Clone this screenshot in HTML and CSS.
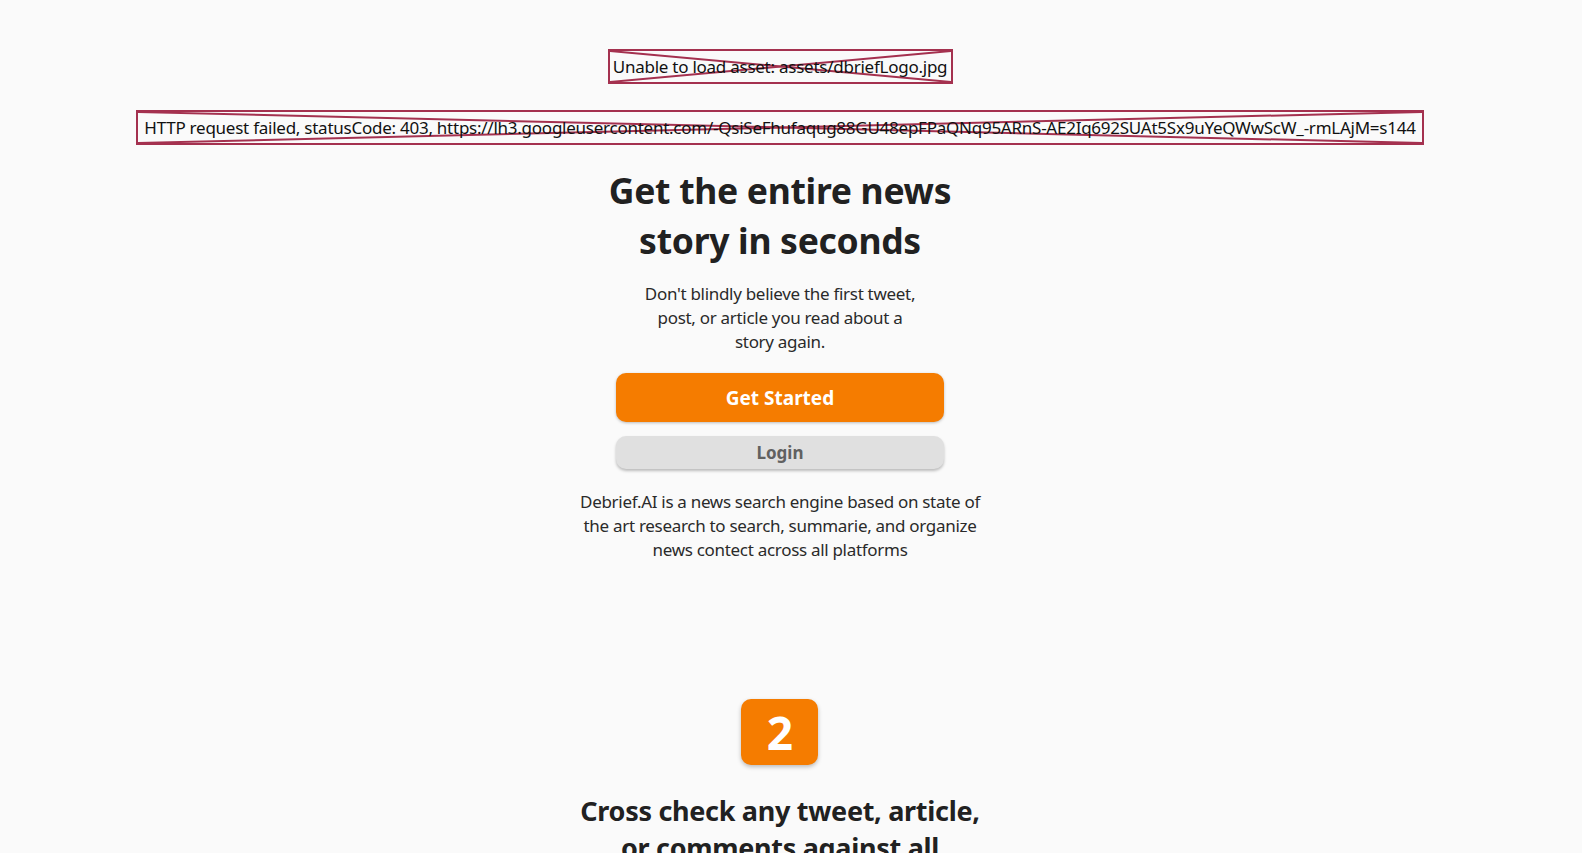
FILE: index.html
```html
<!DOCTYPE html>
<html lang="en">
<head>
<meta charset="utf-8">
<title>Debrief.AI</title>
<link rel="stylesheet" href="styles.css">
</head>
<body>
<main class="page">
  <div class="err err-logo">
    <svg class="err-x" viewBox="0 0 100 100" preserveAspectRatio="none" aria-hidden="true">
      <line x1="0" y1="0" x2="100" y2="100" vector-effect="non-scaling-stroke"/>
      <line x1="0" y1="100" x2="100" y2="0" vector-effect="non-scaling-stroke"/>
    </svg>
    <span class="err-text">Unable to load asset: assets/dbriefLogo.jpg</span>
  </div>
  <div class="err err-http">
    <svg class="err-x" viewBox="0 0 100 100" preserveAspectRatio="none" aria-hidden="true">
      <line x1="0" y1="0" x2="100" y2="100" vector-effect="non-scaling-stroke"/>
      <line x1="0" y1="100" x2="100" y2="0" vector-effect="non-scaling-stroke"/>
    </svg>
    <span class="err-text">HTTP request failed, statusCode: 403, https://lh3.googleusercontent.com/-QsiSeFhufaqug88GU48epFPaQNq95ARnS-AE2Iq692SUAt5Sx9uYeQWwScW_-rmLAjM=s144</span>
  </div>

  <h1 class="hero-title">Get the entire news<br>story in seconds</h1>
  <p class="hero-sub">Don't blindly believe the first tweet,<br>post, or article you read about a<br>story again.</p>

  <div class="actions">
    <button class="btn btn-primary">Get Started</button>
    <button class="btn btn-login">Login</button>
  </div>

  <p class="about">Debrief.AI is a news search engine based on state of<br>the art research to search, summarie, and organize<br>news contect across all platforms</p>

  <section class="step">
    <div class="step-num">2</div>
    <h2 class="step-title">Cross check any tweet, article,<br>or comments against all</h2>
  </section>
</main>
</body>
</html>
```

FILE: styles.css
```css
html, body {
  margin: 0;
  padding: 0;
  background: #fafafa;
}

body {
  font-family: "Noto Sans", "Open Sans", sans-serif;
  color: #212121;
  overflow: hidden;
  height: 853px;
}

.page {
  width: 1560px;
  display: flex;
  flex-direction: column;
  align-items: center;
  padding-top: 49px;
}

.err {
  position: relative;
  box-sizing: border-box;
  height: 35px;
  border: 2px solid #a4314f;
  display: flex;
  align-items: center;
  justify-content: center;
  padding: 0 5px;
}

.err-x {
  position: absolute;
  inset: 0;
  width: 100%;
  height: 100%;
}

.err-x line {
  stroke: #a4314f;
  stroke-width: 2;
}

.err-text {
  position: relative;
  font-size: 17px;
  color: #111;
  white-space: nowrap;
  letter-spacing: -0.25px;
}

.err-logo {
  width: 345px;
}

.err-http {
  width: 1288px;
  margin-top: 26px;
}

.hero-title {
  margin: 20px 0 0;
  font-size: 35.5px;
  line-height: 50px;
  font-weight: 700;
  text-align: center;
  letter-spacing: -0.3px;
}

.hero-sub {
  margin: 17px 0 0;
  font-size: 17px;
  line-height: 24px;
  font-weight: 400;
  text-align: center;
  color: #2a2a2a;
  letter-spacing: -0.3px;
}

.actions {
  display: flex;
  flex-direction: column;
  gap: 14px;
  margin-top: 19px;
}

.btn {
  width: 328px;
  border: none;
  font-family: inherit;
  font-weight: 700;
  cursor: pointer;
}

.btn-primary {
  height: 49px;
  border-radius: 10px;
  background: #f57c00;
  color: #fff;
  font-size: 19px;
  box-shadow: 0 1px 3px rgba(0, 0, 0, 0.25);
}

.btn-login {
  height: 33px;
  border-radius: 10px;
  background: #e0e0e0;
  color: #616161;
  font-size: 17px;
  box-shadow: 0 2px 3px rgba(0, 0, 0, 0.25);
}

.about {
  margin: 21px 0 0;
  font-size: 17px;
  line-height: 24px;
  text-align: center;
  color: #2a2a2a;
  letter-spacing: -0.3px;
}

.step {
  display: flex;
  flex-direction: column;
  align-items: center;
  margin-top: 137px;
}

.step-num {
  width: 77px;
  height: 66px;
  border-radius: 10px;
  background: #f57c00;
  color: #fff;
  font-size: 46px;
  font-weight: 700;
  display: flex;
  align-items: center;
  justify-content: center;
  box-shadow: 0 2px 4px rgba(0, 0, 0, 0.25);
}

.step-title {
  margin: 27px 0 0;
  font-size: 27px;
  line-height: 37px;
  font-weight: 700;
  text-align: center;
  letter-spacing: -0.3px;
}
```
